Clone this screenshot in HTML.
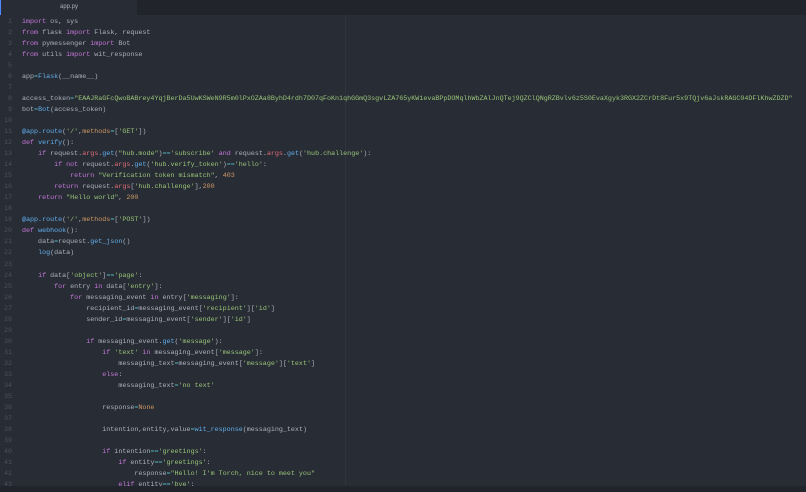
<!DOCTYPE html>
<html><head><meta charset="utf-8"><style>
*{margin:0;padding:0;box-sizing:border-box}
html,body{width:806px;height:492px;overflow:hidden;background:#282c34}
#tabs{position:absolute;left:0;top:0;width:806px;height:15px;background:#21252b}
#tab{position:absolute;left:0;top:0;width:137px;height:15px;background:#282c34;border-left:1px solid #528bff;color:#abb2bf;font:6px "Liberation Sans",sans-serif;text-align:center;line-height:15px}
#ruler{position:absolute;left:345px;top:15px;width:1px;height:471px;background:#2f343d}
#code{position:absolute;left:0;top:16.5px;font-family:"Liberation Mono",monospace;font-size:6.7px;line-height:11.05px;color:#abb2bf}
.l{height:11.05px;white-space:pre}
.n{display:inline-block;width:12px;text-align:right;color:#495162;margin-right:10px}
.k{color:#c678dd}.s{color:#98c379}.f{color:#61afef}.o{color:#d19a66}.r{color:#e06c75}.p{color:#56b6c2}
#bot{position:absolute;left:0;top:486px;width:806px;height:6px;background:#21252b}
</style></head><body>
<div id="tabs"><div id="tab">app.py</div></div>
<div id="ruler"></div>
<div id="code"><div class="l"><span class="n">1</span><span class="k">import</span> os, sys</div><div class="l"><span class="n">2</span><span class="k">from</span> flask <span class="k">import</span> Flask, request</div><div class="l"><span class="n">3</span><span class="k">from</span> pymessenger <span class="k">import</span> Bot</div><div class="l"><span class="n">4</span><span class="k">from</span> utils <span class="k">import</span> wit_response</div><div class="l"><span class="n">5</span></div><div class="l"><span class="n">6</span>app<span class="p">=</span><span class="f">Flask</span>(__name__)</div><div class="l"><span class="n">7</span></div><div class="l"><span class="n">8</span>access_token<span class="p">=</span><span class="s">"EAAJRaGFcQwoBABrey4YqjBerDa5UwKSWeN9R5m0lPxOZAa8ByhD4rdh7D07qFoKn1qhGGmQ3sgvLZA765yKW1evaBPpDOMqlhWbZAlJnQTej9QZClQNgRZBvlv6z5S0EvaXgyk3RGX2ZCrDt8Fur5x9TQjv6aJskRAGC04DFlKhwZDZD"</span></div><div class="l"><span class="n">9</span>bot<span class="p">=</span><span class="f">Bot</span>(access_token)</div><div class="l"><span class="n">10</span></div><div class="l"><span class="n">11</span><span class="f">@app.route</span>(<span class="s">'/'</span>,<span class="o">methods</span><span class="p">=</span>[<span class="s">'GET'</span>])</div><div class="l"><span class="n">12</span><span class="k">def</span> <span class="f">verify</span>():</div><div class="l"><span class="n">13</span>    <span class="k">if</span> request.<span class="r">args</span>.<span class="f">get</span>(<span class="s">"hub.mode"</span>)<span class="p">==</span><span class="s">'subscribe'</span> <span class="k">and</span> request.<span class="r">args</span>.<span class="f">get</span>(<span class="s">'hub.challenge'</span>):</div><div class="l"><span class="n">14</span>        <span class="k">if not</span> request.<span class="r">args</span>.<span class="f">get</span>(<span class="s">'hub.verify_token'</span>)<span class="p">==</span><span class="s">'hello'</span>:</div><div class="l"><span class="n">15</span>            <span class="k">return</span> <span class="s">"Verification token mismatch"</span>, <span class="o">403</span></div><div class="l"><span class="n">16</span>        <span class="k">return</span> request.<span class="r">args</span>[<span class="s">'hub.challenge'</span>],<span class="o">200</span></div><div class="l"><span class="n">17</span>    <span class="k">return</span> <span class="s">"Hello world"</span>, <span class="o">200</span></div><div class="l"><span class="n">18</span></div><div class="l"><span class="n">19</span><span class="f">@app.route</span>(<span class="s">'/'</span>,<span class="o">methods</span><span class="p">=</span>[<span class="s">'POST'</span>])</div><div class="l"><span class="n">20</span><span class="k">def</span> <span class="f">webhook</span>():</div><div class="l"><span class="n">21</span>    data<span class="p">=</span>request.<span class="f">get_json</span>()</div><div class="l"><span class="n">22</span>    <span class="f">log</span>(data)</div><div class="l"><span class="n">23</span></div><div class="l"><span class="n">24</span>    <span class="k">if</span> data[<span class="s">'object'</span>]<span class="p">==</span><span class="s">'page'</span>:</div><div class="l"><span class="n">25</span>        <span class="k">for</span> entry <span class="k">in</span> data[<span class="s">'entry'</span>]:</div><div class="l"><span class="n">26</span>            <span class="k">for</span> messaging_event <span class="k">in</span> entry[<span class="s">'messaging'</span>]:</div><div class="l"><span class="n">27</span>                recipient_id<span class="p">=</span>messaging_event[<span class="s">'recipient'</span>][<span class="s">'id'</span>]</div><div class="l"><span class="n">28</span>                sender_id<span class="p">=</span>messaging_event[<span class="s">'sender'</span>][<span class="s">'id'</span>]</div><div class="l"><span class="n">29</span></div><div class="l"><span class="n">30</span>                <span class="k">if</span> messaging_event.<span class="f">get</span>(<span class="s">'message'</span>):</div><div class="l"><span class="n">31</span>                    <span class="k">if</span> <span class="s">'text'</span> <span class="k">in</span> messaging_event[<span class="s">'message'</span>]:</div><div class="l"><span class="n">32</span>                        messaging_text<span class="p">=</span>messaging_event[<span class="s">'message'</span>][<span class="s">'text'</span>]</div><div class="l"><span class="n">33</span>                    <span class="k">else</span>:</div><div class="l"><span class="n">34</span>                        messaging_text<span class="p">=</span><span class="s">'no text'</span></div><div class="l"><span class="n">35</span></div><div class="l"><span class="n">36</span>                    response<span class="p">=</span><span class="o">None</span></div><div class="l"><span class="n">37</span></div><div class="l"><span class="n">38</span>                    intention,entity,value<span class="p">=</span><span class="f">wit_response</span>(messaging_text)</div><div class="l"><span class="n">39</span></div><div class="l"><span class="n">40</span>                    <span class="k">if</span> intention<span class="p">==</span><span class="s">'greetings'</span>:</div><div class="l"><span class="n">41</span>                        <span class="k">if</span> entity<span class="p">==</span><span class="s">'greetings'</span>:</div><div class="l"><span class="n">42</span>                            response<span class="p">=</span><span class="s">"Hello! I'm Torch, nice to meet you"</span></div><div class="l"><span class="n">43</span>                        <span class="k">elif</span> entity<span class="p">==</span><span class="s">'bye'</span>:</div></div>
<div id="bot"></div>
</body></html>
